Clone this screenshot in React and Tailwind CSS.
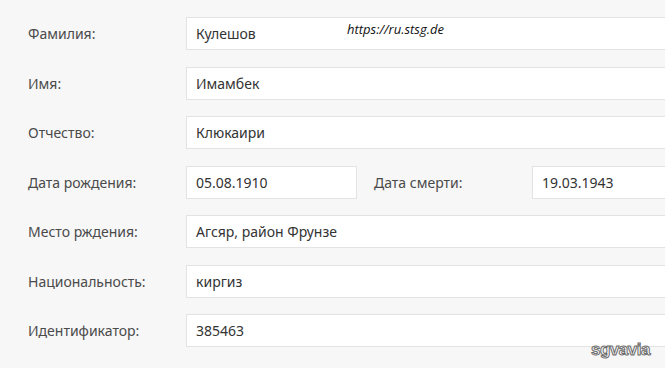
const rows = [
  { label: "Фамилия:", value: "Кулешов" },
  { label: "Имя:", value: "Имамбек" },
  { label: "Отчество:", value: "Клюкаири" },
  { label: "Дата рождения:", value: "05.08.1910", death: "19.03.1943" },
  { label: "Место рждения:", value: "Агсяр, район Фрунзе" },
  { label: "Национальность:", value: "киргиз" },
  { label: "Идентификатор:", value: "385463" },
];

function Field({ children, className = "" }) {
  return (
    <div
      className={`h-[33px] bg-white border border-[#e3e3e3] flex items-center pl-[9px] text-[14px] text-[#333] ${className}`}
    >
      {children}
    </div>
  );
}

export default function App() {
  return (
    <div
      className="relative w-[665px] h-[368px] overflow-hidden bg-[#f7f7f7]"
      style={{ fontFamily: '"Noto Sans", "Open Sans", sans-serif' }}
    >
      <div className="flex flex-col gap-[16.5px] pt-[17px]">
        {rows.map((row) => (
          <div key={row.label} className="flex items-center">
            <div className="w-[186px] pl-[28px] text-[14px] text-[#4a4a4a]">
              {row.label}
            </div>
            {row.death ? (
              <div className="flex items-center flex-1">
                <Field className="w-[171px]">{row.value}</Field>
                <div className="w-[175px] pl-[17px] text-[14px] text-[#4a4a4a]">
                  Дата смерти:
                </div>
                <Field className="flex-1 -mr-[4px]">{row.death}</Field>
              </div>
            ) : (
              <Field className="flex-1 -mr-[4px]">{row.value}</Field>
            )}
          </div>
        ))}
      </div>

      <div
        className="absolute left-[347px] top-[20px] text-[13px] italic text-[#111]"
        style={{ fontFamily: '"Open Sans", sans-serif' }}
      >
        https://ru.stsg.de
      </div>

      <div
        className="absolute left-[591px] top-[337px] text-[17px] font-bold tracking-[-0.5px] text-white [-webkit-text-stroke:1px_#6b6b6b]"
        style={{ fontFamily: '"Liberation Sans", sans-serif' }}
      >
        sgvavia
      </div>
    </div>
  );
}
